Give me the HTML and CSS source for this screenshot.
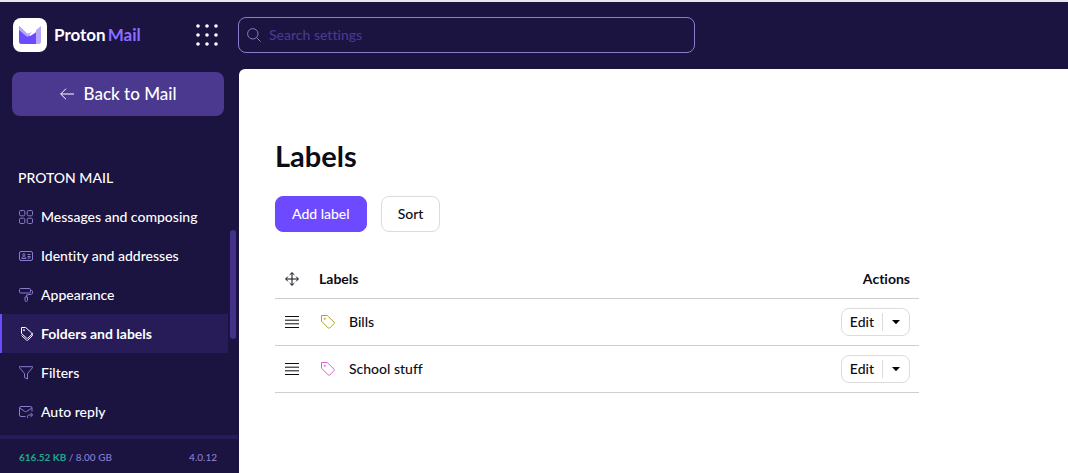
FILE: index.html
```html
<!DOCTYPE html>
<html lang="en">
<head>
  <meta charset="UTF-8" />
  <meta name="viewport" content="width=device-width, initial-scale=1.0" />
  <title>Folders and labels - Proton Mail</title>
  <link rel="stylesheet" href="styles.css">
</head>
<body>
  <div class="app">
    <aside class="sidebar">
      <div class="brand">
        <a class="logo" href="#" aria-label="Proton Mail">
          <span class="logo-mark">
            <svg width="22" height="18" viewBox="0 0 22 18">
              <path d="M0 0l8 8 3 2 5-3 2-2v13H2.500A2.500 2.500 0 0 1 0 15.500z" fill="#6d4aff"/>
              <path d="M0 0l7.500 6.800a3 3 0 0 0 3.500.3l2.200-1.500-3.200 4.200a2 2 0 0 1-2.900.2L0 4z" fill="#b8a6ff"/>
              <path d="M17 4.200L22 0v15.500a2.500 2.500 0 0 1-2.500 2.500H17z" fill="#b8a6ff"/>
            </svg>
          </span>
          <span class="logo-text">Proton<em>Mail</em></span>
        </a>
        <button class="apps" type="button" aria-label="Proton applications">
          <svg width="22" height="22" viewBox="0 0 22 22" fill="#fff">
            <circle cx="2" cy="2" r="1.800"/><circle cx="11" cy="2" r="1.800"/><circle cx="20" cy="2" r="1.800"/>
            <circle cx="2" cy="11" r="1.800"/><circle cx="11" cy="11" r="1.800"/><circle cx="20" cy="11" r="1.800"/>
            <circle cx="2" cy="20" r="1.800"/><circle cx="11" cy="20" r="1.800"/><circle cx="20" cy="20" r="1.800"/>
          </svg>
        </button>
      </div>

      <a class="back" href="#">
        <svg width="14" height="12" viewBox="0 0 14 12" fill="none" stroke="currentColor"><path d="M14 6H.7M6 .7L.7 6 6 11.300"/></svg>
        Back to Mail
      </a>

      <nav class="nav">
        <h2>PROTON MAIL</h2>
        <ul>
          <li><a href="#">
            <svg class="icon" viewBox="0 0 14 14"><rect x=".5" y=".5" width="5.300" height="5.300" rx="1.300"/><rect x="8.200" y=".5" width="5.300" height="5.300" rx="1.300"/><rect x=".5" y="8.200" width="5.300" height="5.300" rx="1.300"/><rect x="8.200" y="8.200" width="5.300" height="5.300" rx="1.300"/></svg>
            Messages and composing</a></li>
          <li><a href="#">
            <svg class="icon" viewBox="0 0 14 14"><rect x=".5" y="2.500" width="13" height="9" rx="1.500"/><circle cx="4.800" cy="5.700" r="1.100"/><path d="M2.800 9.500c0-2.600 4-2.600 4 0zM8.500 5.500h3M8.500 7.500h3M8.500 9h3"/></svg>
            Identity and addresses</a></li>
          <li><a href="#">
            <svg class="icon" viewBox="0 0 14 14"><rect x=".5" y=".5" width="11" height="4.500" rx="1.200"/><path d="M11.500 2.500h1c.7 0 1 .4 1 1v1.500c0 .7-.4 1-1 1.200L7.500 7v2M6 9h2.500v3.300a1.200 1.200 0 0 1-2.500 0z"/></svg>
            Appearance</a></li>
          <li><a class="active" href="#" aria-current="page">
            <svg class="icon" viewBox="0 0 14 14"><path d="M2.500.5h4.200l6 5.500c.5.500.5 1 0 1.500L9 11c-.5.500-1 .5-1.500 0l-5-4.500z"/><circle cx="5" cy="3.200" r=".6"/><path d="M2.500 8.500L7.500 13c.5.500 1 .5 1.500 0l4-4M13.200 5.800V9"/></svg>
            Folders and labels</a></li>
          <li><a href="#">
            <svg class="icon" viewBox="0 0 14 14"><path d="M.5.700h13v1L8.500 7.500V13l-3-1.500v-4L.5 1.700z"/></svg>
            Filters</a></li>
          <li><a href="#">
            <svg class="icon" viewBox="0 0 14 14"><path d="M6.500 11.500H2A1.500 1.500 0 0 1 .5 10V3A1.500 1.500 0 0 1 2 1.500h9.500A1.500 1.500 0 0 1 13 3v3.500M.7 3l4.800 3.300c.8.500 1.700.5 2.500 0L12.800 3M8.500 13v-1.500c0-1 .5-1.500 1.500-1.500h3.500M11.500 7.800L13.600 10l-2.100 2"/></svg>
            Auto reply</a></li>
        </ul>
        <span class="scroll-thumb"></span>
      </nav>

      <footer class="storage">
        <span><strong>616.52 KB</strong> / 8.00 GB</span>
        <span>4.0.12</span>
      </footer>
    </aside>

    <div class="content">
      <header class="topbar">
        <form class="search" role="search">
          <label for="search" aria-label="Search settings">
            <svg width="14" height="14" viewBox="0 0 14 14" fill="none" stroke="currentColor"><circle cx="5.800" cy="5.800" r="5.200"/><path d="M9.600 9.600l4 4"/></svg>
          </label>
          <input id="search" type="text" placeholder="Search settings">
        </form>
      </header>

      <main class="main">
        <h1>Labels</h1>
        <div class="actions">
          <button class="btn btn-primary" type="button">Add label</button>
          <button class="btn" type="button">Sort</button>
        </div>

        <table class="labels">
          <thead>
            <tr>
              <th class="col-drag">
                <svg width="14" height="14" viewBox="0 0 14 14" fill="none" stroke="currentColor"><path d="M7 .7v12.600M.7 7h12.600M4.700 2.800L7 .7l2.300 2.100M4.700 11.200L7 13.300l2.300-2.100M2.800 4.700L.7 7l2.100 2.300M11.200 4.700L13.300 7l-2.100 2.300"/></svg>
              </th>
              <th>Labels</th>
              <th class="col-actions">Actions</th>
            </tr>
          </thead>
          <tbody>
            <tr>
              <td class="col-drag"><svg width="14" height="12" viewBox="0 0 14 12" stroke="currentColor"><path d="M0 .5h14M0 4.200h14M0 7.800h14M0 11.500h14"/></svg></td>
              <td>
                <span class="label-name">
                  <svg class="tag tag-olive" viewBox="0 0 14 14"><path d="M.5.5h5.700l6.900 6.700c.5.500.5.900 0 1.400l-4.400 4.400c-.5.500-.9.500-1.400 0L.5 6.200z"/><circle cx="3.800" cy="3.800" r=".6"/></svg>
                  Bills
                </span>
              </td>
              <td class="col-actions">
                <span class="split">
                  <button type="button">Edit</button>
                  <button class="caret" type="button" aria-label="More options"><svg width="8" height="4" viewBox="0 0 8 4"><path d="M0 0h8L4.500 3.700a.7.700 0 0 1-1 0z"/></svg></button>
                </span>
              </td>
            </tr>
            <tr>
              <td class="col-drag"><svg width="14" height="12" viewBox="0 0 14 12" stroke="currentColor"><path d="M0 .5h14M0 4.200h14M0 7.800h14M0 11.500h14"/></svg></td>
              <td>
                <span class="label-name">
                  <svg class="tag tag-pink" viewBox="0 0 14 14"><path d="M.5.5h5.700l6.900 6.700c.5.500.5.900 0 1.400l-4.400 4.400c-.5.500-.9.500-1.400 0L.5 6.200z"/><circle cx="3.800" cy="3.800" r=".6"/></svg>
                  School stuff
                </span>
              </td>
              <td class="col-actions">
                <span class="split">
                  <button type="button">Edit</button>
                  <button class="caret" type="button" aria-label="More options"><svg width="8" height="4" viewBox="0 0 8 4"><path d="M0 0h8L4.500 3.700a.7.700 0 0 1-1 0z"/></svg></button>
                </span>
              </td>
            </tr>
          </tbody>
        </table>
      </main>
    </div>
  </div>
</body>
</html>
```

FILE: styles.css
```css
:root {
  --primary: #6d4aff;
  --sidebar-bg: #1b1340;
  --sidebar-active: #271c57;
  --sidebar-weak: #8a7ccd;
  --button-bg: #4a398f;
  --text: #0c0c14;
  --border: #d1cfcd;
}

* {
  margin: 0;
  padding: 0;
  box-sizing: border-box;
}

body {
  font-family: Lato, "Open Sans", sans-serif;
  font-size: 14px;
  font-weight: 500;
  font-variant-ligatures: none;
  line-height: 20px;
  color: var(--text);
  background: var(--sidebar-bg);
}

button,
input {
  font: inherit;
  font-variant-ligatures: none;
  color: inherit;
}

button {
  background: none;
  border: none;
  cursor: pointer;
}

a {
  color: inherit;
  text-decoration: none;
}

svg {
  display: block;
  flex-shrink: 0;
}

.app {
  display: flex;
  height: 100vh;
  border-top: 2px solid #e9e9ed;
}

/* Sidebar */
.sidebar {
  display: flex;
  flex-direction: column;
  flex: 0 0 238px;
  color: #fff;
}

.brand {
  display: flex;
  align-items: center;
  justify-content: space-between;
  padding: 16px 20px 20px 13px;
}

.logo {
  display: flex;
  align-items: center;
  gap: 7px;
}

.logo-mark {
  display: grid;
  place-items: center;
  width: 34px;
  height: 34px;
  border-radius: 8px;
  background: #fff;
}

.logo-text {
  display: flex;
  gap: 2px;
  font-size: 17px;
  font-weight: 700;
}

.logo-text em {
  font-style: normal;
  color: #8a6eff;
}

.back {
  display: flex;
  align-items: center;
  justify-content: center;
  gap: 10px;
  height: 44px;
  margin: 0 14px 0 12px;
  border-radius: 8px;
  background: var(--button-bg);
  font-size: 17px;
}

.nav {
  position: relative;
  flex: 1;
  min-height: 0;
  padding-top: 52px;
}

.nav h2 {
  padding: 0 18px;
  margin-bottom: 9px;
  font-size: 14px;
  font-weight: 500;
}

.nav ul {
  list-style: none;
  margin-right: 10px;
}

.nav li a {
  display: flex;
  align-items: center;
  gap: 8px;
  height: 39px;
  padding-left: 17px;
  border-left: 2px solid transparent;
}

.nav li a.active {
  border-color: var(--primary);
  background: var(--sidebar-active);
  font-weight: 700;
}

.icon {
  width: 14px;
  height: 14px;
  fill: none;
  stroke: var(--sidebar-weak);
}

.active .icon {
  stroke: #fff;
}

.scroll-thumb {
  position: absolute;
  top: 114px;
  right: 2px;
  width: 6px;
  height: 109px;
  border-radius: 3px;
  background: #44328a;
}

.storage {
  display: flex;
  justify-content: space-between;
  padding: 8px 21px 6px 19px;
  border-top: 4px solid var(--sidebar-active);
  font-size: 10px;
  color: var(--sidebar-weak);
}

.storage strong {
  color: #1ea885;
}

/* Content */
.content {
  display: flex;
  flex-direction: column;
  flex: 1;
  min-width: 0;
}

.topbar {
  padding: 15px 0 16px;
}

.search {
  display: flex;
  align-items: center;
  gap: 8px;
  width: 55%;
  height: 36px;
  padding: 0 8px;
  border: 1px solid var(--sidebar-weak);
  border-radius: 8px;
  color: var(--sidebar-weak);
}

.search input {
  flex: 1;
  min-width: 0;
  background: none;
  border: none;
  outline: none;
}

.search input::placeholder {
  color: #4a398f;
  opacity: 1;
}

.main {
  flex: 1;
  margin-left: 1px;
  padding: 71px 36px 36px;
  border-top-left-radius: 6px;
  background: #fff;
}

h1 {
  margin-bottom: 24px;
  font-size: 29px;
  line-height: 32px;
}

.actions {
  display: flex;
  gap: 14px;
  margin-bottom: 28px;
}

.btn {
  height: 36px;
  padding: 0 16px;
  border: 1px solid #dedbd9;
  border-radius: 8px;
}

.btn-primary {
  border-color: var(--primary);
  background: var(--primary);
  color: #fff;
}

.labels {
  width: 100%;
  max-width: 644px;
  border-collapse: collapse;
}

.labels th,
.labels td {
  height: 47px;
  border-bottom: 1px solid var(--border);
  text-align: left;
}

.labels th {
  height: 38px;
}

.labels .col-drag {
  width: 44px;
  padding-left: 10px;
}

.labels .col-actions {
  padding-right: 9px;
  text-align: right;
}

.label-name {
  display: flex;
  align-items: center;
  gap: 14px;
  padding-left: 2px;
}

.tag {
  width: 14px;
  height: 14px;
  fill: none;
}

.tag-olive {
  stroke: #b4a40e;
}

.tag-pink {
  stroke: #db60d6;
}

.split {
  display: inline-flex;
  align-items: center;
  height: 28px;
  border: 1px solid #dedbd9;
  border-radius: 8px;
  vertical-align: middle;
}

.split button {
  padding: 0 8px;
}

.split .caret {
  display: flex;
  align-items: center;
  height: 18px;
  padding: 0 9px;
  border-left: 1px solid #dedbd9;
}
```
